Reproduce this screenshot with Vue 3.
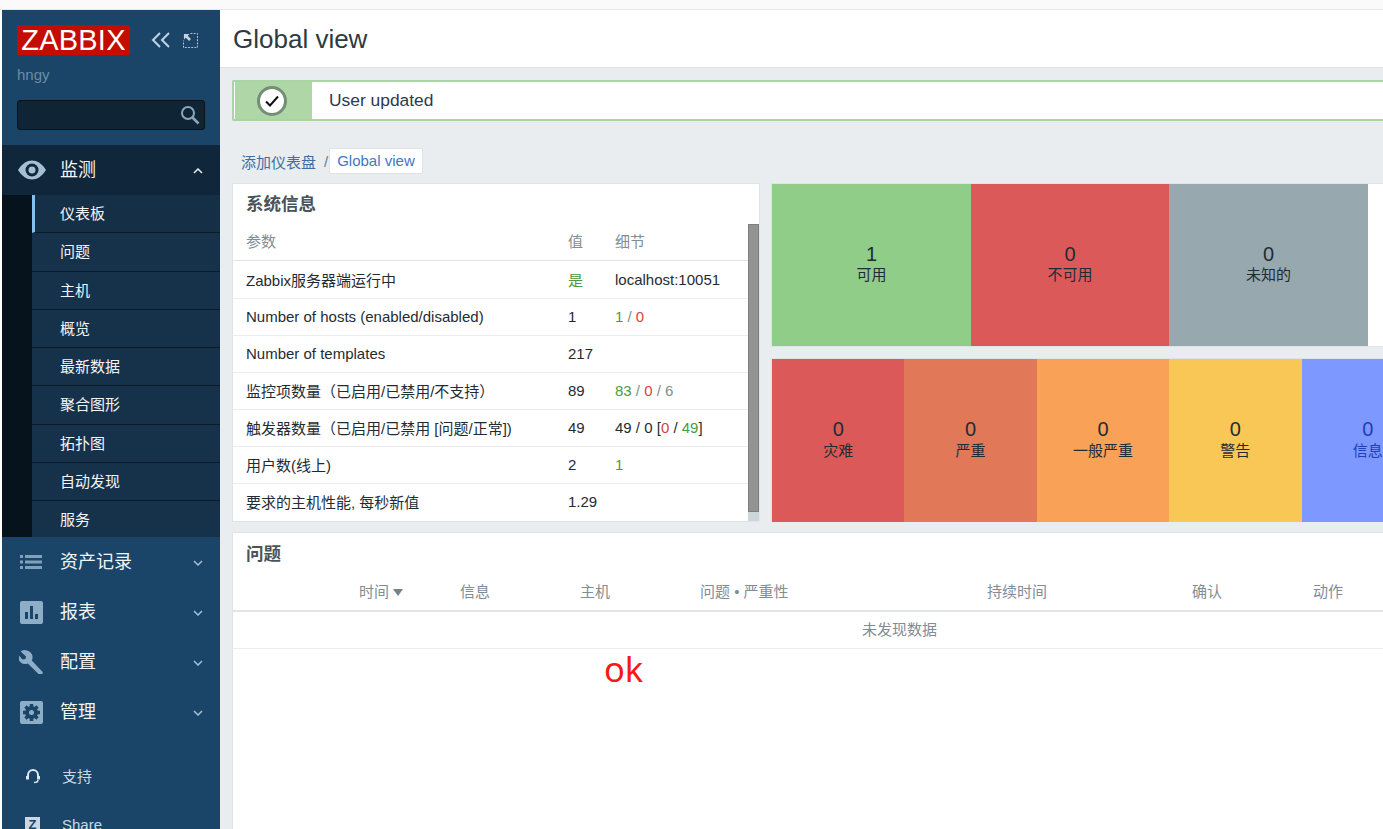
<script setup>
const subItems = ['仪表板', '问题', '主机', '概览', '最新数据', '聚合图形', '拓扑图', '自动发现', '服务']
const menus = [
  { label: '资产记录', icon: 'list' },
  { label: '报表', icon: 'chart' },
  { label: '配置', icon: 'wrench' },
  { label: '管理', icon: 'gear' },
]
const hostTiles = [
  { n: 1, label: '可用', color: '#90cd88', width: 199 },
  { n: 0, label: '不可用', color: '#dc5959', width: 198 },
  { n: 0, label: '未知的', color: '#98a8af', width: 199 },
]
const severityTiles = [
  { n: 0, label: '灾难', color: '#dc5959' },
  { n: 0, label: '严重', color: '#e17858' },
  { n: 0, label: '一般严重', color: '#f9a156' },
  { n: 0, label: '警告', color: '#f9c755' },
  { n: 0, label: '信息', color: '#7d98fe', text: '#1f3fb8' },
]
const problemCols = [
  { label: '时间', width: 101, sort: true },
  { label: '信息', width: 120 },
  { label: '主机', width: 120 },
  { label: '问题 • 严重性', width: 287 },
  { label: '持续时间', width: 205 },
  { label: '确认', width: 121 },
  { label: '动作', width: 60 },
]
</script>

<template>
  <div class="page">
    <div class="topstrip"></div>
    <div class="body">
      <aside class="sidebar">
        <div class="brand">
          <div class="logo-row">
            <span class="logo">ZABBIX</span>
            <svg class="collapse" width="20" height="16" viewBox="0 0 20 16" fill="none" stroke="#c4d3df" stroke-width="2">
              <path d="M9 1 2 8l7 7" /><path d="M18 1l-7 7 7 7" />
            </svg>
            <svg class="kiosk" width="15" height="15" viewBox="0 0 16 16" fill="none">
              <path d="M8 .5h7.5v15H.5V8" stroke="#c4d3df" stroke-dasharray="2 1.4" />
              <path d="M1 1h6L5 3l3.5 3.5-2 2L3 5 1 7z" fill="#c4d3df" />
            </svg>
          </div>
          <div class="user">hngy</div>
          <div class="search">
            <svg width="20" height="20" viewBox="0 0 20 20" fill="none" stroke="#8ba6b9" stroke-width="2">
              <circle cx="8" cy="8" r="6" /><path d="M12.5 12.5 18.5 18.5" stroke-width="2.6" />
            </svg>
          </div>
        </div>

        <div class="section-open">
          <div class="menu-head">
            <svg class="menu-icon" width="28" height="20" viewBox="0 0 28 20">
              <path d="M0 10C4 3.5 9 .5 14 .5S24 3.500 28 10c-4 6.500-9 9.500-14 9.500S4 16.500 0 10z" fill="#a5bfd4" />
              <circle cx="14" cy="10" r="6.500" fill="#10263a" /><circle cx="14" cy="10" r="3.500" fill="#a5bfd4" />
            </svg>
            <span class="menu-label">监测</span>
            <svg class="chev" width="10" height="6" viewBox="0 0 10 6" fill="none" stroke="#e6edf2" stroke-width="1.500"><path d="M1 5l4-4 4 4" /></svg>
          </div>
          <ul class="submenu">
            <li v-for="(item, i) in subItems" :key="item" :class="{ active: i === 0 }">{{ item }}</li>
          </ul>
        </div>

        <div v-for="m in menus" :key="m.label" class="menu-item">
          <svg class="menu-icon small" width="24" height="24" viewBox="0 0 24 24">
            <g v-if="m.icon === 'list'" fill="#7fa1bb">
              <rect x="1" y="5" width="3" height="3" /><rect x="6" y="5" width="17" height="3" />
              <rect x="1" y="10.500" width="3" height="3" /><rect x="6" y="10.500" width="17" height="3" />
              <rect x="1" y="16" width="3" height="3" /><rect x="6" y="16" width="17" height="3" />
            </g>
            <g v-else-if="m.icon === 'chart'">
              <rect x="1" y="1" width="23" height="23" rx="2" fill="#8eadc7" />
              <rect x="6" y="12" width="3" height="7" fill="#1a4569" /><rect x="11" y="6" width="3" height="13" fill="#1a4569" /><rect x="16" y="14" width="3" height="5" fill="#1a4569" />
            </g>
            <path v-else-if="m.icon === 'wrench'" d="M8 .5a7 7 0 0 0-6.300 1L7 6.500 6.500 9 3.500 9.500-.5 5a7 7 0 0 0 9.300 8.500L20 24.500c1 .8 2 .8 3 0s1-2 .2-3L12.800 10.500A7 7 0 0 0 8 .5z" fill="#8eadc7" />
            <g v-else>
              <rect x="1" y="1" width="23" height="23" rx="2" fill="#8eadc7" />
              <circle cx="12.500" cy="12.500" r="4.500" fill="none" stroke="#1a4569" stroke-width="4" />
              <path d="M12.500 4v3M12.500 18v3M4 12.500h3M18 12.500h3M6.500 6.500l2 2M16.500 16.500l2 2M18.500 6.500l-2 2M8.500 16.500l-2 2" stroke="#1a4569" stroke-width="3.500" />
            </g>
          </svg>
          <span class="menu-label">{{ m.label }}</span>
          <svg class="chev" width="10" height="6" viewBox="0 0 10 6" fill="none" stroke="#a5bfd4" stroke-width="1.500"><path d="M1 1l4 4 4-4" /></svg>
        </div>

        <div class="bottom-links">
          <div class="bottom-link">
            <svg width="14" height="16" viewBox="0 0 14 16" fill="none" stroke="#dfe8ee" stroke-width="2">
              <path d="M2 10V7a5 5 0 0 1 10 0v3" />
              <path d="M1.500 8v3.500M12.500 8v3.500" stroke-width="3" />
              <path d="M12 12c0 2-2 2.500-4 2.500" stroke-width="1.500" />
            </svg>
            <span>支持</span>
          </div>
          <div class="bottom-link">
            <span class="z-badge">Z</span>
            <span>Share</span>
          </div>
        </div>
      </aside>

      <main class="main">
        <header class="header"><h1>Global view</h1></header>
        <div class="content">
          <div class="message">
            <div class="message-icon">
              <span class="check-ring">
                <svg width="16" height="14" viewBox="0 0 16 14" fill="none" stroke="#111" stroke-width="2"><path d="M2 7.500 6 11.500 14 2.500" /></svg>
              </span>
            </div>
            <span class="message-text">User updated</span>
          </div>

          <nav class="crumbs">
            <span class="crumb-link">添加仪表盘</span>
            <span class="crumb-sep">/</span>
            <span class="crumb-current">Global view</span>
          </nav>

          <div class="widgets-top">
            <section class="widget sysinfo">
              <div class="sys-inner">
                <h2>系统信息</h2>
                <table class="sys-table">
                  <thead>
                    <tr><th>参数</th><th>值</th><th>细节</th></tr>
                  </thead>
                  <tbody>
                    <tr class="first-row"><td>Zabbix服务器端运行中</td><td class="green">是</td><td>localhost:10051</td></tr>
                    <tr><td>Number of hosts (enabled/disabled)</td><td>1</td><td><span class="green">1</span> <span class="grey">/</span> <span class="red">0</span></td></tr>
                    <tr><td>Number of templates</td><td>217</td><td></td></tr>
                    <tr><td>监控项数量（已启用/已禁用/不支持）</td><td>89</td><td><span class="green">83</span> <span class="grey">/</span> <span class="red">0</span> <span class="grey">/ 6</span></td></tr>
                    <tr><td>触发器数量（已启用/已禁用 [问题/正常])</td><td>49</td><td>49 / 0 [<span class="red">0</span> / <span class="green">49</span>]</td></tr>
                    <tr><td>用户数(线上)</td><td>2</td><td><span class="green">1</span></td></tr>
                    <tr><td>要求的主机性能, 每秒新值</td><td>1.29</td><td></td></tr>
                  </tbody>
                </table>
              </div>
              <div class="scrollbar"><div class="thumb"></div><div class="track"></div></div>
            </section>

            <div class="tiles-col">
              <div class="tiles host-tiles">
                <div v-for="t in hostTiles" :key="t.label" class="tile" :style="{ background: t.color, width: t.width + 'px' }">
                  <span class="tile-num">{{ t.n }}</span>
                  <span class="tile-label">{{ t.label }}</span>
                </div>
              </div>
              <div class="tiles severity-tiles">
                <div v-for="t in severityTiles" :key="t.label" class="tile sev" :style="{ background: t.color, color: t.text }">
                  <span class="tile-num">{{ t.n }}</span>
                  <span class="tile-label">{{ t.label }}</span>
                </div>
              </div>
            </div>
          </div>

          <section class="widget problems">
            <h2>问题</h2>
            <div class="prob-head">
              <span v-for="c in problemCols" :key="c.label" :style="{ width: c.width + 'px' }">
                {{ c.label }}<i v-if="c.sort" class="sort-arrow"></i>
              </span>
            </div>
            <div class="prob-empty">未发现数据</div>
            <div class="ok-note">ok</div>
          </section>
        </div>
      </main>
    </div>
  </div>
</template>

<style>
html, body { margin: 0; height: 100%; overflow: hidden; background: #fff; }
</style>

<style scoped>
.page {
  width: 1383px;
  height: 829px;
  overflow: hidden;
  display: flex;
  flex-direction: column;
  font-family: "Liberation Sans", "Noto Sans CJK SC", sans-serif;
  font-size: 15px;
  color: #1f2c33;
}
.topstrip {
  height: 9px;
  flex: none;
  background: #fafafa;
  border-bottom: 1px solid #e8e8e8;
}
.body {
  flex: 1;
  display: flex;
  min-height: 0;
  padding-left: 2px;
}

/* sidebar */
.sidebar {
  width: 218px;
  flex: none;
  background: #1a4569;
  display: flex;
  flex-direction: column;
  overflow: hidden;
}
.sidebar > * { flex: none; }
.brand {
  height: 135px;
  padding: 15px 15px 0;
  box-sizing: border-box;
}
.logo-row {
  display: flex;
  align-items: center;
}
.logo {
  background: #c40d00;
  color: #fff;
  font-size: 29px;
  line-height: 30px;
  height: 30px;
  width: 113px;
  text-align: center;
  letter-spacing: 0.2px;
}
.collapse { margin-left: 21px; }
.kiosk { margin-left: 12px; }
.user {
  margin-top: 11px;
  color: #6d8ba3;
  line-height: 18px;
}
.search {
  margin-top: 16px;
  width: 188px;
  height: 30px;
  background: #0f2536;
  border: 1px solid #07131c;
  border-radius: 3px;
  display: flex;
  align-items: center;
  justify-content: flex-end;
  padding-right: 4px;
  box-sizing: border-box;
}
.section-open { background: #10263a; }
.menu-head {
  height: 50px;
  display: flex;
  align-items: center;
  padding-left: 16px;
  position: relative;
  background: #10263a;
}
.menu-item {
  height: 50px;
  display: flex;
  align-items: center;
  padding-left: 17px;
  position: relative;
}
.menu-icon { flex: none; }
.menu-label {
  position: absolute;
  left: 58px;
  top: 12px;
  line-height: 26px;
  color: #f2f5f7;
  font-size: 18px;
}
.chev {
  position: absolute;
  right: 17px;
  top: 23px;
}
.submenu {
  list-style: none;
  margin: 0;
  padding: 0 0 0 30px;
  background: #07131c;
}
.submenu li {
  height: 38.250px;
  line-height: 37px;
  box-sizing: border-box;
  background: #16324b;
  border-bottom: 1px solid #0b1c29;
  padding-left: 28px;
  color: #f2f5f7;
}
.submenu li.active {
  background: #152f47;
  border-left: 3px solid #81c0f2;
  padding-left: 25px;
}
.submenu li:last-child {
  height: 36px;
  border-bottom: none;
}
.bottom-links { margin-top: 14px; }
.bottom-link {
  height: 49px;
  display: flex;
  align-items: center;
  color: #c9d8e3;
  padding-left: 24px;
  gap: 22px;
}
.z-badge {
  width: 15px;
  height: 15px;
  margin-left: -1px;
  background: #c9d8e3;
  color: #1a4569;
  font-weight: 700;
  font-size: 13px;
  line-height: 15px;
  text-align: center;
}

/* main */
.main {
  flex: 1;
  min-width: 0;
  background: #e9edf0;
  display: flex;
  flex-direction: column;
}
.header {
  height: 58px;
  flex: none;
  background: #fff;
  border-bottom: 1px solid #dfe4e7;
  box-sizing: border-box;
  padding: 14px 13px 0;
}
.header h1 {
  margin: 0;
  font-weight: 400;
  font-size: 26px;
  line-height: 30px;
  color: #2d3a41;
}
.content {
  padding: 12px 0 0 12px;
  width: 1280px;
}
.message {
  height: 41px;
  box-sizing: border-box;
  border: 2px solid #aad5a2;
  border-right: none;
  border-radius: 2px;
  background: #fff;
  display: flex;
  align-items: center;
  width: 1200px;
}
.message-icon {
  width: 77px;
  height: 100%;
  margin-left: 1px;
  background: #aed6a6;
  display: flex;
  align-items: center;
  justify-content: center;
}
.check-ring {
  width: 24px;
  height: 24px;
  border: 3px solid #748e76;
  border-radius: 50%;
  background: #fff;
  display: flex;
  align-items: center;
  justify-content: center;
  margin-right: 3px;
}
.message-text {
  margin-left: 17px;
  font-size: 17.400px;
  color: #2a3a50;
}
.crumbs {
  display: flex;
  align-items: center;
  margin-top: 27px;
  height: 26px;
  padding-left: 9px;
}
.crumb-link { color: #3e6ea5; }
.crumb-sep { margin: 0 1px 0 8px; color: #6a7a84; }
.crumb-current {
  background: #fff;
  color: #3f77bf;
  border: 1px solid #dfe4e7;
  border-radius: 2px;
  padding: 0 7px;
  line-height: 24px;
}
.widgets-top {
  display: flex;
  gap: 11px;
  margin-top: 9px;
}
.widget {
  background: #fff;
  border: 1px solid #dfe4e7;
  box-sizing: border-box;
}
h2 {
  margin: 0;
  font-size: 17.500px;
  font-weight: 700;
  color: #48535a;
  line-height: 24px;
}
.sysinfo {
  width: 528px;
  height: 339px;
  display: flex;
}
.sys-inner {
  flex: 1;
  min-width: 0;
  padding-top: 8px;
}
.sysinfo h2 { padding-left: 13px; }
.sys-table {
  width: 100%;
  table-layout: fixed;
  margin-top: 6px;
  border-collapse: collapse;
}
.sys-table th {
  font-weight: 400;
  color: #7f8d96;
  text-align: left;
  height: 38px;
  padding: 0;
  border-bottom: 1px solid #dfe4e7;
  box-sizing: border-box;
}
.sys-table td {
  height: 37px;
  padding: 0;
  border-bottom: 1px solid #ebeef0;
  box-sizing: border-box;
  white-space: nowrap;
}
.sys-table .first-row td { height: 38px; }
.sys-table tr:last-child td { border-bottom: none; }
.sys-table th:first-child, .sys-table td:first-child { padding-left: 13px; width: 335px; }
.sys-table th:nth-child(2), .sys-table td:nth-child(2) { width: 47px; }
.green { color: #4d9a3f; }
.red { color: #d8423e; }
.grey { color: #7f8d96; }
.scrollbar {
  width: 11px;
  flex: none;
  display: flex;
  flex-direction: column;
}
.thumb {
  margin-top: 40px;
  height: 288px;
  background: #939393;
  border: 1px solid #7e7e7e;
  box-sizing: border-box;
}
.track {
  flex: 1;
  background: #cdd6db;
}
.tiles-col {
  flex: 1;
  min-width: 0;
  display: flex;
  flex-direction: column;
  gap: 11px;
}
.tiles {
  display: flex;
  background: #fff;
  border: 1px solid #dfe4e7;
  border-right: none;
  box-sizing: border-box;
}
.host-tiles { height: 164px; }
.severity-tiles { height: 164px; border-bottom: none; }
.tile {
  flex: none;
  display: flex;
  flex-direction: column;
  align-items: center;
  justify-content: center;
  padding-bottom: 2px;
  box-sizing: border-box;
}
.sev { width: 132.400px; }
.sev .tile-label { margin-top: 1px; }
.tile-num { font-size: 20px; line-height: 22px; }
.tile-label { line-height: 20px; }

.problems {
  margin-top: 10px;
  height: 320px;
  position: relative;
}
.problems h2 { padding: 9px 0 0 13px; }
.prob-head {
  display: flex;
  margin-top: 6px;
  height: 36px;
  padding-left: 126px;
  padding-bottom: 2px;
  align-items: center;
  color: #7f8d96;
  border-bottom: 2px solid #dfe4e7;
}
.prob-head span { flex: none; white-space: nowrap; }
.sort-arrow {
  display: inline-block;
  width: 0;
  height: 0;
  border-left: 5.500px solid transparent;
  border-right: 5.500px solid transparent;
  border-top: 7px solid #73838c;
  margin-left: 4px;
  vertical-align: 1px;
}
.prob-empty {
  height: 37px;
  line-height: 36px;
  box-sizing: border-box;
  width: 1333px;
  text-align: center;
  color: #7f8d96;
  border-bottom: 1px solid #ebeef0;
}
.ok-note {
  position: absolute;
  left: 371px;
  top: 115px;
  color: #f81818;
  font-family: "Noto Sans", "Open Sans", sans-serif;
  font-size: 34.500px;
  line-height: 42px;
}
</style>
